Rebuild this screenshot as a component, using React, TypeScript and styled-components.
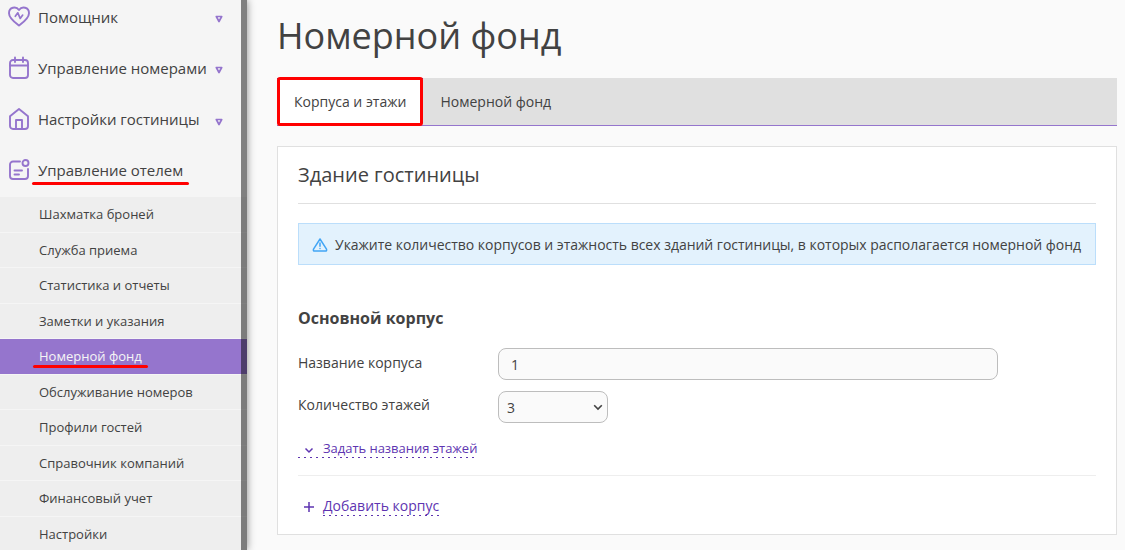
import React from "react";
import styled, { createGlobalStyle } from "styled-components";

const GlobalStyle = createGlobalStyle`
  * { box-sizing: border-box; }
  body {
    margin: 0;
    background: #fafafa;
    color: #424242;
    font: 14px/20px "Open Sans", "Noto Sans", sans-serif;
    overflow: hidden;
  }
`;

const Page = styled.div`
  display: flex;
  height: 550px;
  overflow: hidden;
`;

const Sidebar = styled.aside`
  position: relative;
  flex: 0 0 247px;
  height: 550px;
  overflow: hidden;
  background: #f5f5f5;
`;

const SidebarShell = styled.div`
  flex: 0 0 247px;
  box-shadow: 0 0 8px rgba(0, 0, 0, 0.45);
  z-index: 1;
`;

const ScrollTrack = styled.div`
  position: absolute;
  top: 0;
  right: 0;
  width: 6px;
  height: 100%;
  background: rgba(0, 0, 0, 0.48);
`;

const MenuList = styled.nav`
  display: flex;
  flex-direction: column;
  margin-top: -9px;
`;

const MenuRow = styled.div`
  display: flex;
  align-items: center;
  height: 51px;
  padding-left: 7px;
  font-size: 15px;
`;

const MenuIcon = styled.svg`
  width: 24px;
  height: 24px;
  flex: none;
  margin-top: 1px;
  fill: none;
  stroke: #9575cd;
  stroke-width: 1.9;
  stroke-linecap: round;
  stroke-linejoin: round;
`;

const MenuLabel = styled.span`
  position: relative;
  flex: 1;
  margin-left: 7px;
  white-space: nowrap;
  letter-spacing: -0.02px;
`;

const Caret = styled.svg<{ $top: number }>`
  flex: none;
  width: 8px;
  height: 8px;
  margin: ${(p) => p.$top}px 24px 0 0;
  fill: none;
  stroke: #9575cd;
  stroke-width: 1.7;
  stroke-linejoin: round;
`;

const Underline = styled.i<{ $width: number; $top: number }>`
  position: absolute;
  left: -6px;
  top: ${(p) => p.$top}px;
  width: ${(p) => p.$width}px;
  height: 3px;
  border-radius: 2px;
  background: #ff0000;
`;

const SubMenu = styled.div`
  background: #eeeeee;
  height: 357px;
  margin-top: 2px;
`;

const SubItem = styled.div<{ $active?: boolean }>`
  display: flex;
  align-items: center;
  height: 35.53px;
  padding-left: 39px;
  border-bottom: 1px solid #f5f5f5;
  font-size: 13px;
  background: ${(p) => (p.$active ? "#9575cd" : "#eeeeee")};
  color: ${(p) => (p.$active ? "#f5f5f5" : "#424242")};
`;

const SubLabel = styled.span`
  position: relative;
  white-space: nowrap;
`;

const Main = styled.main`
  flex: 1;
  padding: 9px 8px 0 30px;
`;

const Title = styled.h1`
  margin: 0;
  height: 69px;
  font-size: 36px;
  line-height: 54px;
  font-weight: 400;
`;

const Tabs = styled.div`
  display: flex;
  height: 48px;
  background: #e0e0e0;
  border-bottom: 1px solid #9575cd;
`;

const Tab = styled.div<{ $active?: boolean }>`
  position: relative;
  height: 47px;
  width: 146px;
  padding-left: ${(p) => (p.$active ? "17px" : "17.5px")};
  line-height: 46px;
  white-space: nowrap;
  background: ${(p) => (p.$active ? "#ffffff" : "transparent")};
  border-top: ${(p) => (p.$active ? "1px solid #5e35b1" : "1px solid transparent")};
`;

const TabHighlight = styled.i`
  position: absolute;
  left: -0.5px;
  top: -2px;
  width: 146px;
  height: 49px;
  border: 3px solid #ff0000;
  border-radius: 3px;
`;

const Card = styled.section`
  height: 389px;
  margin-top: 20px;
  padding: 0 20px;
  background: #fff;
  border: 1px solid #e0e0e0;
`;

const CardTitle = styled.h2`
  margin: 0 0 19px;
  height: 57px;
  border-bottom: 1px solid #e0e0e0;
  font-size: 20px;
  line-height: 56px;
  font-weight: 400;
`;

const Notice = styled.div`
  display: flex;
  align-items: center;
  height: 42px;
  padding: 1px 0 0 13px;
  border: 1px solid #bbdefb;
  background: #e3f2fd;
  white-space: nowrap;
  letter-spacing: -0.022px;
`;

const NoticeIcon = styled.svg`
  flex: none;
  width: 16px;
  height: 14px;
  margin-right: 7px;
  fill: none;
  stroke: #42a5f5;
  stroke-width: 1.5;
  stroke-linecap: round;
  stroke-linejoin: round;
`;

const GroupTitle = styled.h3`
  margin: 41px 0 18px;
  font-size: 16px;
  line-height: 24px;
  font-weight: 700;
`;

const Field = styled.div`
  display: flex;
  height: 32px;
  margin-bottom: 11px;
`;

const FieldLabel = styled.label<{ $line?: number }>`
  width: 200px;
  line-height: ${(p) => p.$line ?? 29}px;
`;

const fieldBox = `
  height: 32px;
  border: 1px solid #bdbdbd;
  border-radius: 8px;
  background: #fafafa;
  color: #424242;
  font: 14px "Open Sans", "Noto Sans", sans-serif;
  outline: none;
`;

const TextInput = styled.input`
  ${fieldBox}
  width: 500px;
  padding: 0 12px;
`;

const SelectBox = styled.div`
  position: relative;
  width: 110px;
  height: 32px;
`;

const Select = styled.select`
  ${fieldBox}
  appearance: none;
  width: 110px;
  padding: 0 8px;
`;

const SelectArrow = styled.svg`
  position: absolute;
  right: 5px;
  top: 13px;
  width: 10px;
  height: 7px;
  fill: none;
  stroke: #424242;
  stroke-width: 1.6;
  pointer-events: none;
`;

const LinkRow = styled.div`
  display: flex;
  height: 42px;
  padding-top: 5px;
  border-bottom: 1px solid #eeeeee;
`;

const dotted = `
  background-image: repeating-linear-gradient(to right, #5e35b1 0 2px, transparent 2px 6px);
  background-repeat: no-repeat;
  background-size: 100% 1px;
  background-position: left bottom;
`;

const ExpandLink = styled.a`
  display: flex;
  height: 19px;
  line-height: 18px;
  color: #5e35b1;
  font-size: 13px;
  letter-spacing: -0.03px;
  ${dotted}
`;

const AddRow = styled.div`
  display: flex;
  align-items: center;
  padding-top: 20px;
`;

const AddLink = styled.a`
  height: 20px;
  line-height: 20px;
  color: #5e35b1;
  ${dotted}
`;

const LinkIcon = styled.svg<{ $top: number }>`
  flex: none;
  width: 12px;
  height: 12px;
  margin: ${(p) => p.$top}px 8px 0 5px;
  fill: none;
  stroke: #5e35b1;
  stroke-width: 1.5;
`;

const menu = [
  {
    label: "Помощник",
    caretTop: 5,
    icon: (
      <>
        <path d="M12 20.5C8.5 17.8 2 13.4 2 8.2C2 2.2 9 .8 12 5C15 .8 22 2.2 22 8.2C22 13.4 15.5 17.8 12 20.5Z" />
        <path d="M8.3 11.3 10.8 7.8 13.2 13.4 15.7 10.1" strokeWidth="1.7" />
      </>
    ),
  },
  {
    label: "Управление номерами",
    caretTop: 5,
    icon: (
      <>
        <rect x="3" y="4" width="18" height="18" rx="3" />
        <path d="M3 9.5h18M8 1.5V6M16 1.5V6" />
      </>
    ),
  },
  {
    label: "Настройки гостиницы",
    caretTop: 7,
    icon: (
      <>
        <path d="M3 9.3 12 2l9 7.3V19a3 3 0 0 1-3 3H6a3 3 0 0 1-3-3Z" />
        <path d="M9 22v-9h6v9" />
      </>
    ),
  },
];

const subItems = [
  "Шахматка броней",
  "Служба приема",
  "Статистика и отчеты",
  "Заметки и указания",
  "Номерной фонд",
  "Обслуживание номеров",
  "Профили гостей",
  "Справочник компаний",
  "Финансовый учет",
  "Настройки",
];

export default function App() {
  return (
    <>
      <GlobalStyle />
      <Page>
        <SidebarShell>
          <Sidebar>
            <MenuList>
              {menu.map((m) => (
                <MenuRow key={m.label}>
                  <MenuIcon viewBox="0 0 24 24">{m.icon}</MenuIcon>
                  <MenuLabel>{m.label}</MenuLabel>
                  <Caret $top={m.caretTop} viewBox="0 0 8 8">
                    <path d="M1.3 1.5h5.4L4 6.5Z" />
                  </Caret>
                </MenuRow>
              ))}
              <MenuRow>
                <MenuIcon viewBox="0 0 24 24">
                  <path d="M13 3.5H6a3 3 0 0 0-3 3V18a3 3 0 0 0 3 3h12a3 3 0 0 0 3-3v-7M7.5 12.5h7.5M7.5 16.5h4.5" />
                  <circle cx="18.5" cy="5" r="3" />
                </MenuIcon>
                <MenuLabel>
                  Управление отелем
                  <Underline $width={157} $top={22} />
                </MenuLabel>
              </MenuRow>
            </MenuList>
            <SubMenu>
              {subItems.map((label, i) => (
                <SubItem key={label} $active={i === 4}>
                  <SubLabel>
                    {label}
                    {i === 4 && <Underline $width={115} $top={19} />}
                  </SubLabel>
                </SubItem>
              ))}
            </SubMenu>
            <ScrollTrack />
          </Sidebar>
        </SidebarShell>
        <Main>
          <Title>Номерной фонд</Title>
          <Tabs>
            <Tab $active>
              Корпуса и этажи
              <TabHighlight />
            </Tab>
            <Tab>Номерной фонд</Tab>
          </Tabs>
          <Card>
            <CardTitle>Здание гостиницы</CardTitle>
            <Notice>
              <NoticeIcon viewBox="0 0 16 14">
                <path d="M8 1 14.5 11.2Q15 13 13.5 13H2.5Q1 13 1.5 11.2ZM8 5v3.2M8 10.4v.2" />
              </NoticeIcon>
              Укажите количество корпусов и этажность всех зданий гостиницы, в которых располагается номерной фонд
            </Notice>
            <GroupTitle>Основной корпус</GroupTitle>
            <Field>
              <FieldLabel>Название корпуса</FieldLabel>
              <TextInput defaultValue="1" />
            </Field>
            <Field>
              <FieldLabel $line={27}>Количество этажей</FieldLabel>
              <SelectBox>
                <Select defaultValue="3">
                  <option>3</option>
                </Select>
                <SelectArrow viewBox="0 0 10 7">
                  <path d="M1.2 1.3 5 5.1l3.8-3.8" />
                </SelectArrow>
              </SelectBox>
            </Field>
            <LinkRow>
              <ExpandLink>
                <LinkIcon $top={5} viewBox="0 0 12 12">
                  <path d="M2.5 4.5 6 8l3.5-3.5" />
                </LinkIcon>
                Задать названия этажей
              </ExpandLink>
            </LinkRow>
            <AddRow>
              <LinkIcon $top={2} viewBox="0 0 12 12">
                <path d="M6 1v10M1 6h10" />
              </LinkIcon>
              <AddLink>Добавить корпус</AddLink>
            </AddRow>
          </Card>
        </Main>
      </Page>
    </>
  );
}
